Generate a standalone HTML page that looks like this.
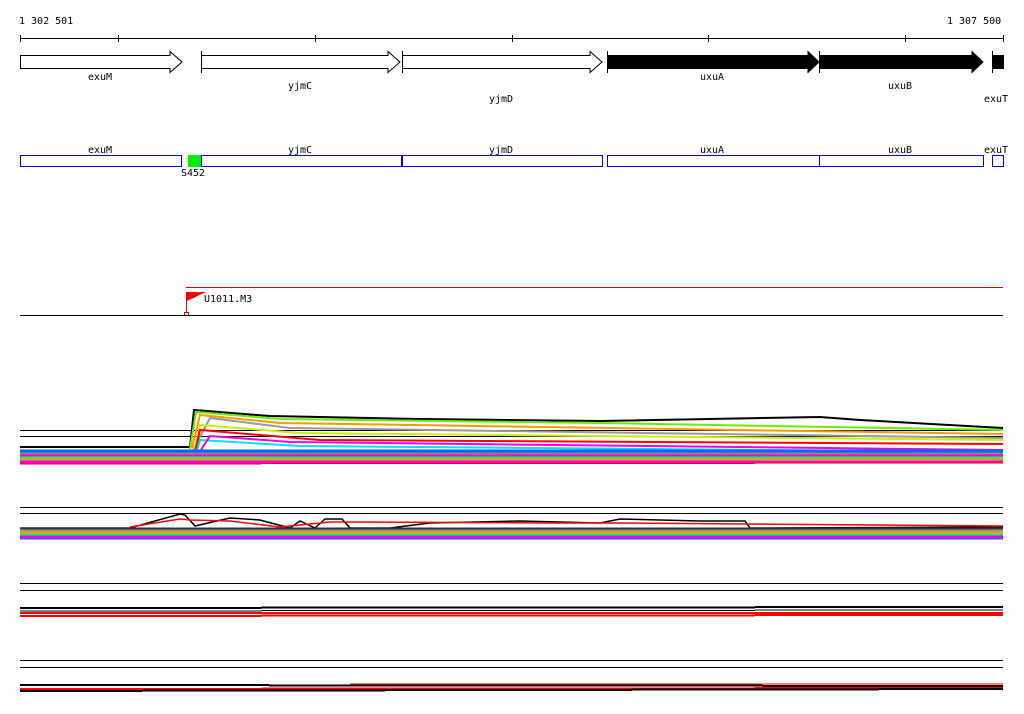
<!DOCTYPE html>
<html><head><meta charset="utf-8"><style>
html,body{margin:0;padding:0;background:#fff;width:1024px;height:714px;overflow:hidden}
svg{display:block}
text{font-family:"DejaVu Sans Mono","Liberation Mono",monospace;font-size:10px;fill:#000}
</style></head><body>
<svg width="1024" height="714" viewBox="0 0 1024 714" shape-rendering="crispEdges">
<text x="19" y="24">1 302 501</text>
<text x="947" y="24">1 307 500</text>
<g stroke="#000" stroke-width="1">
<line x1="20" y1="38.5" x2="1003" y2="38.5"/>
<line x1="20.5" y1="35" x2="20.5" y2="42"/><line x1="118.5" y1="35" x2="118.5" y2="42"/>
<line x1="315.5" y1="35" x2="315.5" y2="42"/><line x1="512.5" y1="35" x2="512.5" y2="42"/>
<line x1="708.5" y1="35" x2="708.5" y2="42"/><line x1="905.5" y1="35" x2="905.5" y2="42"/>
<line x1="1003.5" y1="35" x2="1003.5" y2="42"/>
</g>
<g stroke="#000" fill="#fff" shape-rendering="auto">
<polygon points="20.5,55.5 170,55.5 170,51.5 182,62 170,72.5 170,68.5 20.5,68.5"/>
<polygon points="201.5,55.5 388,55.5 388,51.5 400,62 388,72.5 388,68.5 201.5,68.5"/>
<polygon points="402.5,55.5 590,55.5 590,51.5 602,62 590,72.5 590,68.5 402.5,68.5"/>
<polygon fill="#000" points="607.5,55.5 808,55.5 808,51.5 819,62 808,72.5 808,68.5 607.5,68.5"/>
<polygon fill="#000" points="819.5,55.5 972,55.5 972,51.5 983,62 972,72.5 972,68.5 819.5,68.5"/>
<rect fill="#000" x="992.5" y="55.5" width="11" height="13"/>
</g>
<g stroke="#000"><line x1="201.5" y1="51" x2="201.5" y2="73"/><line x1="402.5" y1="51" x2="402.5" y2="73"/><line x1="607.5" y1="51" x2="607.5" y2="73"/><line x1="819.5" y1="51" x2="819.5" y2="73"/><line x1="992.5" y1="51" x2="992.5" y2="73"/></g>
<text x="88" y="80">exuM</text><text x="288" y="89">yjmC</text><text x="489" y="102">yjmD</text>
<text x="700" y="80">uxuA</text><text x="888" y="89">uxuB</text><text x="984" y="102">exuT</text>
<text x="88" y="153">exuM</text><text x="288" y="153">yjmC</text><text x="489" y="153">yjmD</text>
<text x="700" y="153">uxuA</text><text x="888" y="153">uxuB</text><text x="984" y="153">exuT</text>
<g stroke="#0000dd" fill="#fff">
<rect x="20.5" y="155.5" width="161" height="11"/><rect x="201.5" y="155.5" width="200" height="11"/>
<rect x="402.5" y="155.5" width="200" height="11"/><rect x="607.5" y="155.5" width="212" height="11"/>
<rect x="819.5" y="155.5" width="164" height="11"/><rect x="992.5" y="155.5" width="11" height="11"/>
</g>
<rect x="188" y="155" width="13" height="12" fill="#00ee00"/>
<text x="181" y="176">S452</text>
<line x1="186" y1="287.5" x2="1003" y2="287.5" stroke="#d00"/>
<line x1="186.5" y1="292" x2="186.5" y2="313" stroke="#e00"/>
<polygon points="187,292 206,292 187,301" fill="#f00"/>
<rect x="184.5" y="312.5" width="4" height="3" fill="none" stroke="#e00"/>
<text x="204" y="302">U1011.M3</text>
<line x1="20" y1="315.5" x2="1003" y2="315.5" stroke="#000"/>
<g stroke="#000"><line x1="20" y1="430.5" x2="1003" y2="430.5"/><line x1="20" y1="436.5" x2="1003" y2="436.5"/>
<line x1="20" y1="507.5" x2="1003" y2="507.5"/><line x1="20" y1="513.5" x2="1003" y2="513.5"/>
<line x1="20" y1="583.5" x2="1003" y2="583.5"/><line x1="20" y1="590.5" x2="1003" y2="590.5"/>
<line x1="20" y1="660.5" x2="1003" y2="660.5"/><line x1="20" y1="667.5" x2="1003" y2="667.5"/></g>
<g fill="none" stroke-width="2" shape-rendering="auto">
<path stroke="#000" d="M20,447 L190,447 L194,410 L270,416 L420,419 L600,421 L820,417 L860,420 L1003,428"/>
<path stroke="#66ee00" d="M190,449 L196,412 L280,419 L600,423 L1003,430"/>
<path stroke="#ff9900" d="M192,448 L200,415 L280,423 L1003,434"/>
<path stroke="#999" d="M193,450 L210,418 L290,428 L1003,438"/>
<path stroke="#ccee00" d="M194,452 L200,425 L300,433 L1003,440"/>
<path stroke="#f00" d="M195,452 L200,430 L320,440 L1003,444"/>
<path stroke="#00e0ff" d="M196,455 L200,440 L300,446 L1003,452"/>
<path stroke="#ee00ee" d="M197,456 L210,436 L290,442 L1003,450"/>
</g>
<g stroke-width="3">
<line x1="20" y1="451" x2="1003" y2="451" stroke="#0066ff"/>
<line x1="20" y1="454" x2="1003" y2="454" stroke="#888"/>
<line x1="20" y1="456" x2="1003" y2="456" stroke="#ff00cc"/>
<line x1="20" y1="458" x2="1003" y2="458" stroke="#00ff66"/>
<line x1="20" y1="460" x2="1003" y2="460" stroke="#ff9900"/>
<line x1="20" y1="462" x2="1003" y2="462" stroke="#ee00ee"/>
<line x1="20" y1="464" x2="1003" y2="463" stroke="#f00" stroke-width="1"/>
</g>
<g fill="none" stroke-width="1.5" shape-rendering="auto">
<path stroke="#000" d="M20,528 L130,528 L180,514 L185,515 L195,526 L230,518 L260,520 L290,528 L300,521 L315,528 L325,519 L342,519 L350,528 L390,528 L430,523 L520,521 L600,523 L620,519 L700,521 L745,521 L750,528 L1003,527"/>
<path stroke="#f00" d="M130,527 L180,519 L190,520 L230,521 L280,527 L330,522 L342,522 L560,523 L620,523 L1003,526"/>
</g>
<g stroke-width="3">
<line x1="20" y1="529" x2="1003" y2="529" stroke="#333"/>
<line x1="20" y1="531" x2="1003" y2="531" stroke="#999"/>
<line x1="20" y1="533" x2="1003" y2="533" stroke="#ff9900"/>
<line x1="20" y1="535" x2="1003" y2="535" stroke="#00ff66"/>
<line x1="20" y1="537" x2="1003" y2="537" stroke="#ee00ee"/>
<line x1="20" y1="539" x2="1003" y2="539" stroke="#0066ff" stroke-width="1"/>
</g>
<g stroke-width="2">
<line x1="20" y1="608" x2="1003" y2="607" stroke="#000"/>
<line x1="20" y1="611" x2="1003" y2="610" stroke="#000" stroke-width="1"/>
<line x1="20" y1="613" x2="1003" y2="613" stroke="#f00"/>
<line x1="20" y1="616" x2="1003" y2="615" stroke="#f00"/>
<line x1="20" y1="685" x2="1003" y2="686" stroke="#000"/>
<line x1="20" y1="689" x2="1003" y2="688" stroke="#f00"/>
<line x1="20" y1="691" x2="1003" y2="689" stroke="#000"/>
<line x1="350" y1="684" x2="1003" y2="684" stroke="#f00" stroke-width="1"/>
</g>
</svg>
</body></html>
